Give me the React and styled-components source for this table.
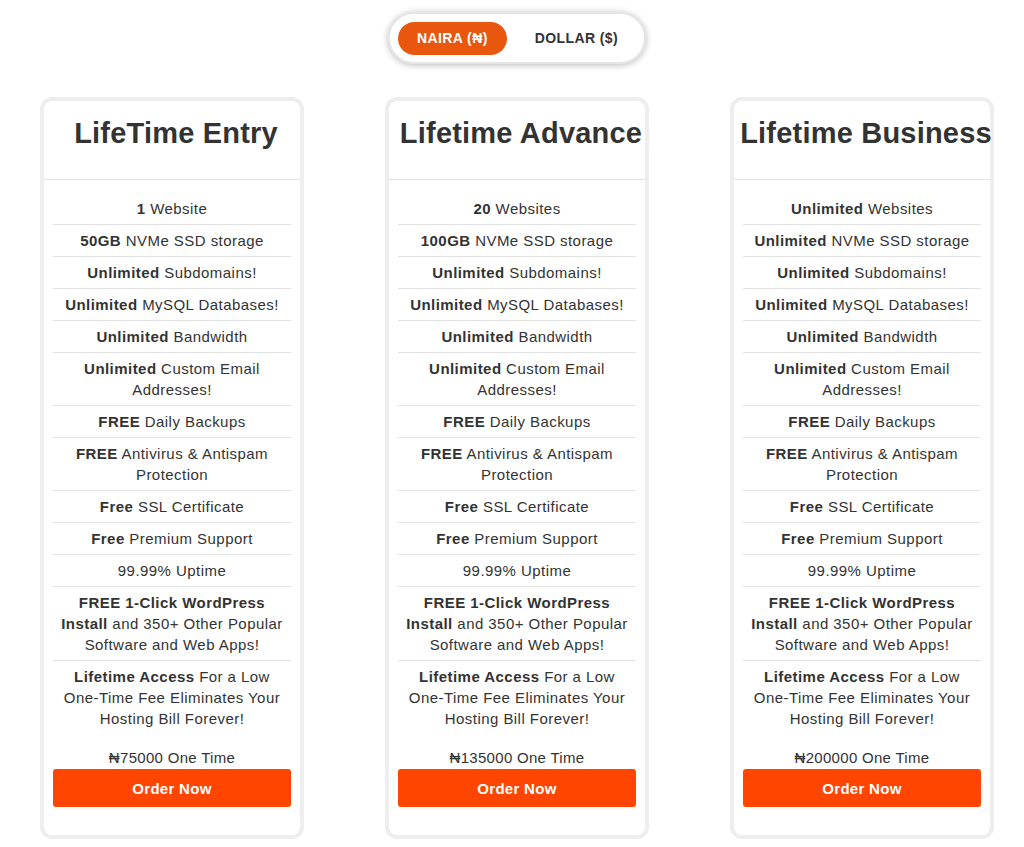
import styled, { createGlobalStyle } from 'styled-components';

const GlobalStyle = createGlobalStyle`
  body {
    margin: 0;
    background: #fff;
    font-family: "Liberation Sans", Arial, "DejaVu Sans", sans-serif;
    color: #333;
  }
`;

const Page = styled.div`
  width: 954px;
  padding: 12px 0 0 40px;
`;

const ToggleRow = styled.div`
  display: flex;
  justify-content: center;
`;

const Toggle = styled.div`
  display: flex;
  align-items: center;
  gap: 12px;
  width: 258px;
  height: 52px;
  box-sizing: border-box;
  padding: 0 8px;
  border: 2px solid #e6e6e6;
  border-radius: 26px;
  background: #fff;
  box-shadow: 0 1px 7px rgba(0, 0, 0, 0.28);
`;

const ToggleButton = styled.button`
  height: 33px;
  padding: 0 ${({ $active }) => ($active ? '19px' : '16px')};
  border: none;
  border-radius: 17px;
  background: ${({ $active }) => ($active ? '#e9560d' : 'transparent')};
  color: ${({ $active }) => ($active ? '#fff' : '#333')};
  font-family: "Liberation Sans", Arial, "DejaVu Sans", sans-serif;
  font-size: 14px;
  letter-spacing: 0.4px;
  font-weight: 700;
  cursor: pointer;
`;

const Cards = styled.div`
  display: flex;
  gap: 81px;
  margin-top: 33px;
  align-items: flex-start;
`;

const Card = styled.div`
  width: 264px;
  box-sizing: border-box;
  border: 4px solid #eee;
  border-radius: 12px;
  background: #fff;
  padding-bottom: 28px;
`;

const CardHeader = styled.div`
  padding: 16px 0 29px 8px;
  border-bottom: 1px solid #e2e2e2;
  display: flex;
  justify-content: center;
  white-space: nowrap;
`;

const Title = styled.h2`
  margin: 0;
  font-size: 29px;
  line-height: 33px;
  letter-spacing: 0.2px;
  font-weight: 700;
  color: #333;
`;

const Features = styled.ul`
  list-style: none;
  margin: 13px 0 0;
  padding: 0 9px;
`;

const Feature = styled.li`
  padding: 5px 2px;
  font-size: 15px;
  line-height: 21px;
  letter-spacing: 0.45px;
  text-align: center;
  color: #333;
  border-bottom: 1px solid #e2e2e2;

  &:last-child {
    border-bottom: none;
  }

  b {
    font-weight: 700;
  }
`;

const Price = styled.div`
  margin-top: 13px;
  font-size: 15px;
  line-height: 21px;
  letter-spacing: 0.3px;
  text-align: center;
  color: #333;
`;

const OrderButton = styled.button`
  display: block;
  width: calc(100% - 18px);
  height: 38px;
  margin: 1px 9px 0;
  border: none;
  border-radius: 3px;
  background: #ff4500;
  color: #fff;
  font-family: "Liberation Sans", Arial, "DejaVu Sans", sans-serif;
  font-size: 15px;
  letter-spacing: 0.3px;
  font-weight: 700;
  cursor: pointer;
`;

const plans = [
  { title: 'LifeTime Entry', sites: ['1', ' Website'], storage: '50GB', price: '75000' },
  { title: 'Lifetime Advance', sites: ['20', ' Websites'], storage: '100GB', price: '135000' },
  { title: 'Lifetime Business', sites: ['Unlimited', ' Websites'], storage: 'Unlimited', price: '200000' },
];

const PlanCard = ({ plan }) => (
  <Card>
    <CardHeader>
      <Title>{plan.title}</Title>
    </CardHeader>
    <Features>
      <Feature><b>{plan.sites[0]}</b>{plan.sites[1]}</Feature>
      <Feature><b>{plan.storage}</b> NVMe SSD storage</Feature>
      <Feature><b>Unlimited</b> Subdomains!</Feature>
      <Feature><b>Unlimited</b> MySQL Databases!</Feature>
      <Feature><b>Unlimited</b> Bandwidth</Feature>
      <Feature><b>Unlimited</b> Custom Email Addresses!</Feature>
      <Feature><b>FREE</b> Daily Backups</Feature>
      <Feature><b>FREE</b> Antivirus &amp; Antispam Protection</Feature>
      <Feature><b>Free</b> SSL Certificate</Feature>
      <Feature><b>Free</b> Premium Support</Feature>
      <Feature>99.99% Uptime</Feature>
      <Feature><b>FREE 1-Click WordPress Install</b> and 350+ Other Popular Software and Web Apps!</Feature>
      <Feature><b>Lifetime Access</b> For a Low One-Time Fee Eliminates Your Hosting Bill Forever!</Feature>
    </Features>
    <Price>₦{plan.price} One Time</Price>
    <OrderButton>Order Now</OrderButton>
  </Card>
);

export default function App() {
  return (
    <>
      <GlobalStyle />
      <Page>
        <ToggleRow>
          <Toggle>
            <ToggleButton $active>NAIRA (₦)</ToggleButton>
            <ToggleButton>DOLLAR ($)</ToggleButton>
          </Toggle>
        </ToggleRow>
        <Cards>
          {plans.map((p) => (
            <PlanCard key={p.title} plan={p} />
          ))}
        </Cards>
      </Page>
    </>
  );
}
